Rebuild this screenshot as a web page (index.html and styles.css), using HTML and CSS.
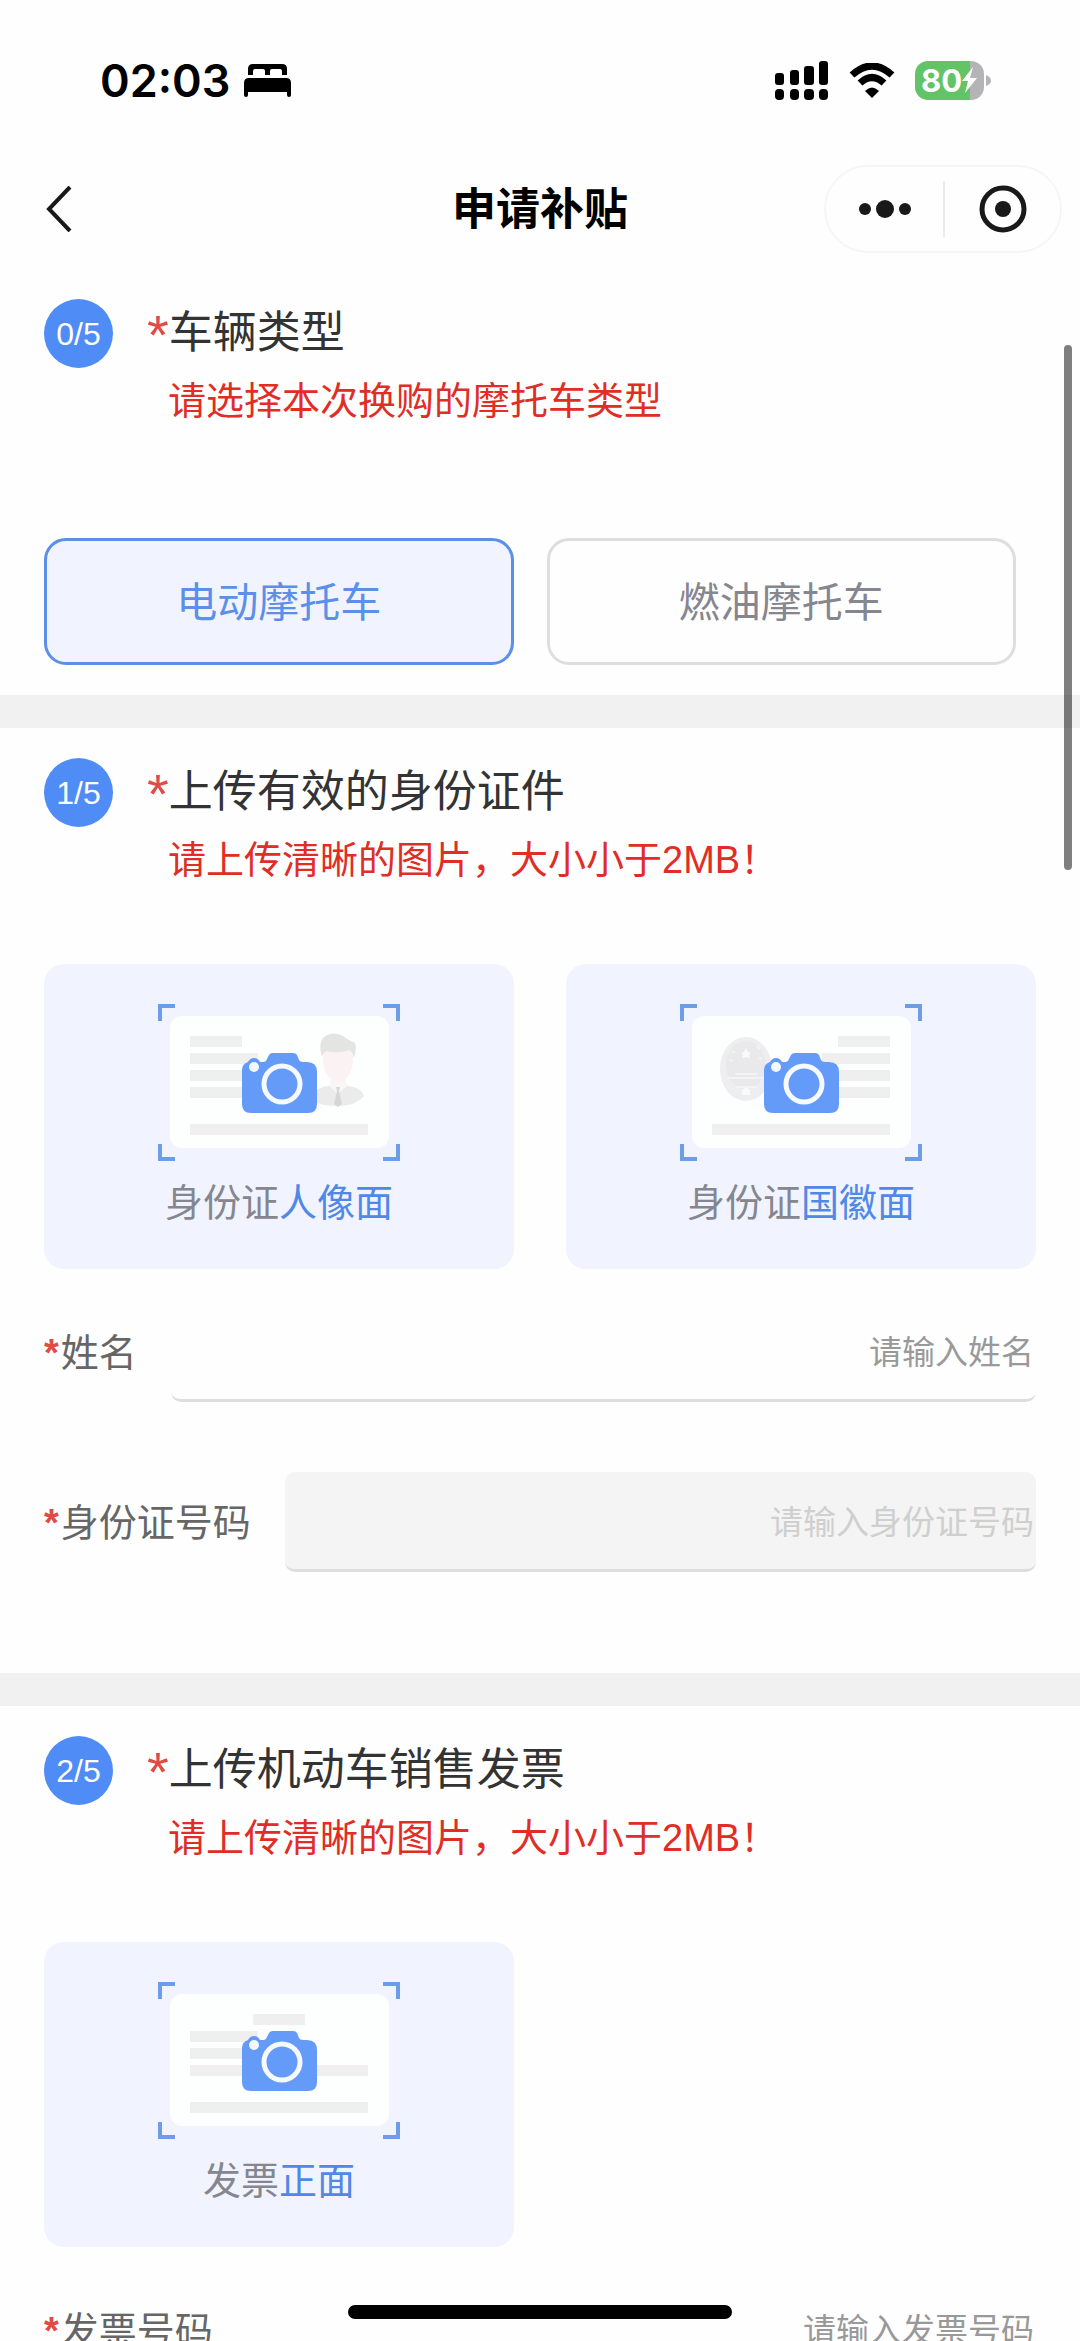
FILE: index.html
```html
<!DOCTYPE html>
<html lang="zh-CN">
<head>
    <meta charset="UTF-8">
    <meta name="viewport" content="width=device-width, initial-scale=1.0">
    <title>申请补贴</title>
    <link rel="stylesheet" href="styles.css">
</head>
<body>
    <!-- 公用图标 -->
    <svg class="sprite" aria-hidden="true">
        <symbol id="corners" viewBox="0 0 242 157">
            <path d="M2 17V2H17M225 2H240V17M240 140V155H225M17 155H2V140" fill="none" stroke="#6c9de6" stroke-width="4"/>
        </symbol>
        <symbol id="camera" viewBox="0 0 75 60">
            <path d="M9 60Q0 60 0 51V17Q0 11 6 9Q8 5 12 5Q16 5 18 9H22Q24 9 25 6L27 2Q28 0 31 0H51Q54 0 55 2L57 7Q58 9 61 9H65Q75 9 75 19V51Q75 60 66 60Z" fill="#659bf8"/>
            <circle cx="40" cy="31" r="18" fill="none" stroke="#f6faff" stroke-width="5"/>
            <circle cx="12" cy="14" r="5" fill="#f3f8ff"/>
        </symbol>
    </svg>

    <div class="app">
        <div class="status-bar">
            <div class="status-left">
                <span class="time">02:03</span>
                <svg width="47" height="33" viewBox="0 0 47 33">
                    <path d="M4 11V5Q4 0 9 0H38Q43 0 43 5V11H38V7Q38 5 36 5H28Q26 5 26 7V11H21V7Q21 5 19 5H11Q9 5 9 7V11Z"/>
                    <path d="M0 31V19Q0 14 5 14H42Q47 14 47 19V31Q47 33 45 33Q43 33 43 31V28H4V31Q4 33 2 33Q0 33 0 31Z"/>
                </svg>
            </div>
            <div class="status-right">
                <svg width="54" height="39" viewBox="0 0 54 39">
                    <rect x="0" y="12" width="9" height="12" rx="3"/>
                    <rect x="15" y="9" width="9" height="15" rx="3"/>
                    <rect x="29" y="5" width="10" height="19" rx="3"/>
                    <rect x="44" y="0" width="9" height="24" rx="3"/>
                    <rect x="0" y="28" width="9" height="11" rx="4"/>
                    <rect x="15" y="28" width="9" height="11" rx="4"/>
                    <rect x="29" y="28" width="10" height="11" rx="4"/>
                    <rect x="44" y="28" width="9" height="11" rx="4"/>
                </svg>
                <svg width="46" height="35" viewBox="0 0 46 35">
                    <path d="M3 12Q23 -6 43 12M11 20Q23 9 35 20" fill="none" stroke="#000" stroke-width="7"/>
                    <path d="M16 28Q23 21 30 28L23 35Z"/>
                </svg>
                <div class="battery">
                    <span>80</span>
                    <svg width="15" height="26" viewBox="0 0 15 26"><path d="M11 0L0 14H6L3 26L15 11H8Z" fill="#fff"/></svg>
                </div>
                <svg class="battery-tip" width="5" height="11" viewBox="0 0 5 11"><path d="M0 0Q5 2 5 6Q5 9 0 11Z" fill="#b4b3b6"/></svg>
            </div>
        </div>

        <header class="nav-bar">
            <button class="nav-back" type="button" aria-label="返回">
                <svg width="26" height="46" viewBox="0 0 26 46"><path d="M24 1L3 23L24 45" fill="none" stroke="#191919" stroke-width="4"/></svg>
            </button>
            <h1>申请补贴</h1>
            <div class="capsule">
                <button type="button" aria-label="更多">
                    <svg width="52" height="20" viewBox="0 0 52 20" fill="#191919"><circle cx="6" cy="10" r="6"/><circle cx="26" cy="10" r="9"/><circle cx="46" cy="10" r="6"/></svg>
                </button>
                <button type="button" aria-label="关闭">
                    <svg width="48" height="48" viewBox="0 0 48 48"><circle cx="24" cy="24" r="21" fill="none" stroke="#191919" stroke-width="5"/><circle cx="24" cy="24" r="8" fill="#191919"/></svg>
                </button>
            </div>
        </header>

        <main class="content">
            <section class="section">
                <div class="section-head">
                    <span class="step">0/5</span>
                    <div>
                        <h2><span class="required">*</span>车辆类型</h2>
                        <p class="hint">请选择本次换购的摩托车类型</p>
                    </div>
                </div>
                <div class="options">
                    <button class="option active" type="button" aria-pressed="true">电动摩托车</button>
                    <button class="option" type="button" aria-pressed="false">燃油摩托车</button>
                </div>
            </section>

            <section class="section">
                <div class="section-head">
                    <span class="step">1/5</span>
                    <div>
                        <h2><span class="required">*</span>上传有效的身份证件</h2>
                        <p class="hint">请上传清晰的图片，大小小于2MB！</p>
                    </div>
                </div>
                <div class="uploads">
                    <button class="upload" type="button">
                        <svg width="242" height="157" viewBox="0 0 242 157">
                            <use href="#corners"/>
                            <rect x="12" y="12" width="219" height="132" rx="12" fill="#fdfefe"/>
                            <path d="M32 32H84V43H32ZM32 49H100V60H32ZM32 66H100V77H32ZM32 83H100V94H32ZM32 120H210V131H32Z" fill="#efefef"/>
                            <path d="M155 92Q158 83 170 82L176 79H185L190 82Q203 83 206 92Q198 102 180 102Q162 102 155 97Z" fill="#ebebeb"/>
                            <path d="M173 74H187L189 82L180 90L171 82Z" fill="#fbf6f6"/>
                            <path d="M165 46H195V58Q194 70 185 77Q180 80 175 77Q166 70 165 58Z" fill="#fbf3f3"/>
                            <path d="M164 53Q160 40 165 34Q171 28 180 30Q185 31 189 35L197 39Q199 46 196 54Q195 49 192 46Q180 50 168 47Q165 49 164 53Z" fill="#e4e4e4"/>
                            <path d="M178 83H182L181 87L184 100L180 103L176 100L179 87Z" fill="#d6d6d8"/>
                            <use href="#camera" x="84" y="49" width="75" height="60"/>
                        </svg>
                        <span class="upload-label">身份证<em>人像面</em></span>
                    </button>
                    <button class="upload" type="button">
                        <svg width="242" height="157" viewBox="0 0 242 157">
                            <use href="#corners"/>
                            <rect x="12" y="12" width="219" height="132" rx="12" fill="#fdfefe"/>
                            <path d="M158 32H210V43H158ZM142 49H210V60H142ZM142 66H210V77H142ZM142 83H210V94H142ZM32 120H210V131H32Z" fill="#efefef"/>
                            <ellipse cx="66" cy="65" rx="26" ry="32" fill="#eeedf0"/>
                            <ellipse cx="66" cy="61" rx="20" ry="24" fill="#e9e8eb"/>
                            <path d="M66 44L68 48L71 49L69 51L70 54L66 53L62 54L63 51L61 49L64 48Z" fill="#faf9fb"/>
                            <path d="M52 47L55 49M77 42L80 45M50 56L53 57M79 54L82 55M48 74H84M55 70H78M57 83H77" stroke="#f3f2f4" stroke-width="2"/>
                            <path d="M62 86L66 83L70 86V91H62Z" fill="#faf9fb"/>
                            <use href="#camera" x="84" y="49" width="75" height="60"/>
                        </svg>
                        <span class="upload-label">身份证<em>国徽面</em></span>
                    </button>
                </div>
                <div class="field">
                    <label for="name"><span class="required">*</span>姓名</label>
                    <input id="name" type="text" placeholder="请输入姓名">
                </div>
                <div class="field">
                    <label for="idNumber"><span class="required">*</span>身份证号码</label>
                    <input id="idNumber" type="text" placeholder="请输入身份证号码" disabled>
                </div>
            </section>

            <section class="section">
                <div class="section-head">
                    <span class="step">2/5</span>
                    <div>
                        <h2><span class="required">*</span>上传机动车销售发票</h2>
                        <p class="hint">请上传清晰的图片，大小小于2MB！</p>
                    </div>
                </div>
                <div class="uploads">
                    <button class="upload" type="button">
                        <svg width="242" height="157" viewBox="0 0 242 157">
                            <use href="#corners"/>
                            <rect x="12" y="12" width="219" height="132" rx="12" fill="#fdfefe"/>
                            <path d="M95 32H147V43H95ZM32 49H100V60H32ZM32 66H100V77H32ZM32 83H210V94H32ZM32 120H210V131H32Z" fill="#efefef"/>
                            <use href="#camera" x="84" y="49" width="75" height="60"/>
                        </svg>
                        <span class="upload-label">发票<em>正面</em></span>
                    </button>
                </div>
                <div class="field">
                    <label for="invoiceNumber"><span class="required">*</span>发票号码</label>
                    <input id="invoiceNumber" type="text" placeholder="请输入发票号码">
                </div>
            </section>
        </main>

        <div class="scroll-thumb"></div>
        <div class="home-indicator"></div>
    </div>
</body>
</html>
```

FILE: styles.css
```css
:root {
    --primary: #508cf5;
    --danger: #e02d26;
    --text: #333;
    --muted: #85868f;
    --card: #f1f4fe;
    --line: #dedede;
}

* {
    box-sizing: border-box;
    margin: 0;
    padding: 0;
}

body {
    font-family: 'Liberation Sans', 'Noto Sans CJK SC', sans-serif;
    background: #fefefe;
    color: var(--text);
}

button,
input {
    font-family: inherit;
    border: none;
    background: none;
}

button {
    cursor: pointer;
}

.sprite {
    position: absolute;
    width: 0;
    height: 0;
}

.app {
    position: relative;
    height: 100vh;
    display: flex;
    flex-direction: column;
    overflow: hidden;
}

/* 状态栏 */
.status-bar {
    flex: none;
    height: 160px;
    padding: 0 89px 0 100px;
    display: flex;
    align-items: center;
    justify-content: space-between;
}

.status-left,
.status-right {
    display: flex;
    align-items: center;
}

.status-left {
    gap: 14px;
}

.time {
    font-family: 'Inter', sans-serif;
    font-size: 45px;
    font-weight: 600;
    color: #000;
}

.status-right {
    gap: 20px;
}

.battery {
    width: 69px;
    height: 39px;
    padding-left: 6px;
    border-radius: 13px;
    display: flex;
    align-items: center;
    background: linear-gradient(90deg, #62c466 80%, #b4b3b6 80%);
    font-family: 'Inter', sans-serif;
    font-size: 31px;
    font-weight: 700;
    color: #fff;
}

.battery-tip {
    margin-left: -18px;
}

/* 导航栏 */
.nav-bar {
    flex: none;
    height: 109px;
    padding: 0 18px 12px;
    display: grid;
    grid-template-columns: 1fr auto 1fr;
    align-items: center;
}

.nav-back {
    justify-self: start;
    padding: 10px 28px;
    display: flex;
}

.nav-bar h1 {
    padding-bottom: 6px;
    font-size: 44px;
    font-weight: 700;
    color: #000;
}

.capsule {
    justify-self: end;
    width: 238px;
    height: 88px;
    border: 2px solid #f6f6f6;
    border-radius: 44px;
    display: grid;
    grid-template-columns: 1fr 1fr;
    align-items: center;
}

.capsule button {
    height: 56px;
    display: flex;
    align-items: center;
    justify-content: center;
}

.capsule button + button {
    border-left: 2px solid #ececec;
}

/* 表单内容 */
.content {
    flex: 1;
    min-height: 0;
    overflow-y: auto;
    scrollbar-width: none;
}

.section {
    padding: 30px 44px;
}

.section + .section {
    border-top: 33px solid #f1f1f1;
    padding-bottom: 101px;
}

.section-head {
    display: flex;
    gap: 34px;
}

.step {
    width: 69px;
    height: 69px;
    border-radius: 50%;
    background: var(--primary);
    color: #fff;
    font-size: 32px;
    line-height: 70px;
    text-align: center;
}

h2 {
    margin-bottom: 6px;
    font-family: 'Noto Sans CJK SC', sans-serif;
    font-size: 44px;
    font-weight: 400;
    line-height: 60px;
}

.required {
    color: #e04b44;
}

h2 .required {
    font-family: 'Liberation Sans', sans-serif;
    font-size: 56px;
    line-height: 0;
    vertical-align: -6px;
}

.hint {
    padding-left: 21px;
    font-size: 38px;
    line-height: 72px;
    color: var(--danger);
}

.options {
    display: grid;
    grid-template-columns: 1fr 1fr;
    gap: 33px;
    margin-top: 101px;
    padding-right: 20px;
}

.option {
    height: 127px;
    padding-bottom: 6px;
    border: 3px solid var(--line);
    border-radius: 22px;
    font-size: 41px;
    color: var(--muted);
}

.option.active {
    border-color: #5b8fe8;
    background: var(--card);
    color: #5b8fe8;
}

.uploads {
    display: grid;
    grid-template-columns: 1fr 1fr;
    gap: 52px;
    margin-top: 68px;
}

.upload {
    padding: 40px 0 38px;
    border-radius: 20px;
    background: var(--card);
    display: flex;
    flex-direction: column;
    align-items: center;
    gap: 14px;
}

.upload-label {
    font-size: 38px;
    line-height: 56px;
    color: var(--muted);
}

.upload-label em {
    font-style: normal;
    color: #5088e8;
}

.field {
    display: flex;
    align-items: center;
    gap: 34px;
    margin-top: 33px;
}

.field + .field {
    margin-top: 70px;
}

.field label {
    padding-bottom: 6px;
    font-size: 38px;
    color: #666;
}

.field .required {
    margin-right: 2px;
    font-weight: 700;
}

.field input {
    flex: 1;
    min-width: 0;
    height: 100px;
    padding: 4px 2px 0 0;
    border-bottom: 3px solid var(--line);
    border-radius: 10px;
    font-size: 33px;
    text-align: right;
    color: var(--text);
}

.field input::placeholder {
    color: #999;
    opacity: 1;
}

.field input:disabled {
    background: #f4f4f4;
}

.field input:disabled::placeholder {
    color: #cfcfcf;
}

/* 悬浮层 */
.scroll-thumb {
    position: absolute;
    top: 345px;
    right: 8px;
    width: 8px;
    height: 525px;
    border-radius: 4px;
    background: rgba(0, 0, 0, 0.5);
}

.home-indicator {
    position: absolute;
    bottom: 22px;
    left: 50%;
    width: 384px;
    height: 14px;
    border-radius: 7px;
    background: #000;
    transform: translateX(-50%);
}
```
